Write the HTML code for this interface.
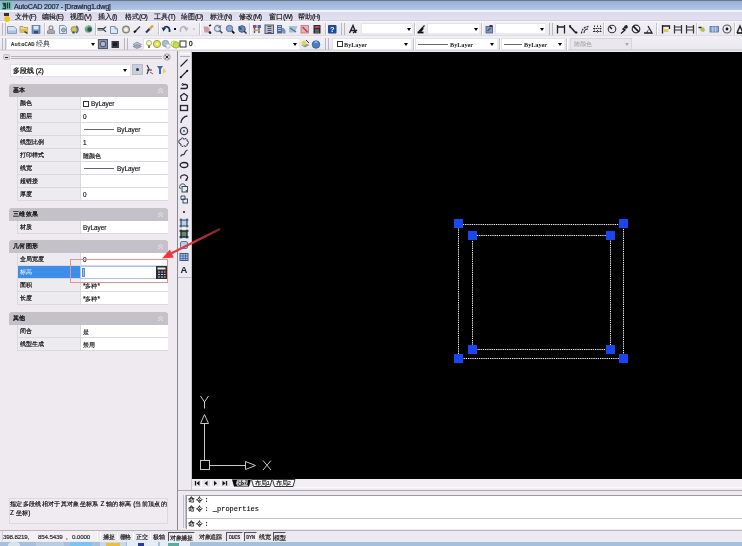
<!DOCTYPE html><html><head><meta charset="utf-8"><style>*{margin:0;padding:0;box-sizing:border-box}
html{width:742px;height:546px;overflow:hidden;background:#eeeaf0}
body{filter:blur(.35px);width:742px;height:546px;overflow:hidden;background:#eeeaf0;font-family:"Liberation Sans",sans-serif;color:#222}
.a{position:absolute}
svg.a{overflow:visible}
#title{left:0;top:0;width:742px;height:12px;background:linear-gradient(#6a7890 0,#6a7890 1px,#98b0d2 1px,#b2c8ea 10.5px,#f2f4fc 10.5px,#f2f4fc 12px)}
#title .t{left:14px;top:0.5px;font-size:7.2px;line-height:11px;color:#1c2436;letter-spacing:-0.25px;-webkit-text-stroke:.2px #1c2436}
#menu{left:0;top:12px;width:742px;height:10px;background:linear-gradient(#dcd8ec 0,#e2e0f0 7.5px,#d2d0da 8px,#d2d0da 9px,#f8f8fc 9px)}
.mi{top:0px;font-size:7px;line-height:10px;color:#111;white-space:nowrap;-webkit-text-stroke:.15px #111}.mi i{font-style:normal;font-size:7px;letter-spacing:-.7px}
#tb1{left:0;top:22px;width:742px;height:14px;background:linear-gradient(#f2f0f6,#ebe9f0 12.5px,#c8c6cc 13px,#f6f4f8 14px)}
#tb2{left:0;top:36px;width:742px;height:15px;background:linear-gradient(#f2f0f6,#ebe9f0 13px,#c8c6cc 14px,#eeeaf0 15px)}
.dd{background:#fff;border:1px solid #ebe9f0;border-top-color:#e4e2e8;border-left-color:#e4e2e8}
.arr{width:0;height:0;border-left:2.5px solid transparent;border-right:2.5px solid transparent;border-top:3px solid #000}
.hd{width:4px;height:12px;border-left:1px solid #b8b6be;border-right:1px solid #b8b6be}
.sp{width:2px;height:12px;border-left:1px solid #c4c2ca;border-right:1px solid #fff}
.wtxt{font-size:6.4px;line-height:12px;color:#222;white-space:nowrap}
.wtxt2{font-family:"Liberation Serif",serif;font-size:6.2px;font-weight:bold;line-height:13px;color:#222;white-space:nowrap}
#panel{left:0;top:51px;width:177px;height:479px;background:#eeeaf0}
#vline{left:176.5px;top:51px;width:1.5px;height:479px;background:#8a8890}
#vtb{left:178px;top:51px;width:14px;height:439px;background:#eceaf0;border-right:1px solid #c8c6cc}
#canvas{left:192px;top:52px;width:550px;height:427px;background:#000}
.ptxt{font-size:6.5px;line-height:12px;color:#111;-webkit-text-stroke:.25px #111;white-space:nowrap}
.sh{left:9px;width:159px;height:13px;background:#c5c1c9;border-radius:3px 3px 0 0;font-size:6px;line-height:12px;padding-left:4px;letter-spacing:.4px;color:#111;-webkit-text-stroke:.3px #111;white-space:nowrap}
.row{left:17px;width:151px;height:13px;font-size:6.4px;line-height:11px;border-bottom:1px solid #dcd8e0;white-space:nowrap}
.row .l{position:absolute;left:0;top:0;width:63px;height:12px;padding-left:2px;border-left:1px solid #dcd8e0;background:#eeebf0;color:#111;-webkit-text-stroke:.2px #111}
.row .v{position:absolute;left:63px;top:0;width:88px;height:12px;padding-left:2px;line-height:13px;background:#fff;border-left:1px solid #dcd8e0;color:#111;-webkit-text-stroke:.15px #111}
.row.sel .l{background:#3d8ee8;color:#fff;-webkit-text-stroke:0}
.ln{position:absolute;left:3px;top:6px;width:30px;height:1px;background:#666}
.cb{position:absolute;left:2px;top:3.5px;width:6px;height:6px;border:1px solid #333;background:#fff}
.desc{font-size:7px;line-height:10px;color:#111;white-space:nowrap;-webkit-text-stroke:.2px #111;transform:scale(.905);transform-origin:0 0}
#cmd{left:178px;top:490px;width:564px;height:40px;background:#eeeaf0;border-top:1px solid #a8a6ae}
#cmdbox{left:186px;top:495px;width:556px;height:34px;background:#fff;border-left:1px solid #9a98a0;border-top:1px solid #9a98a0}
.ct{font-family:"Liberation Mono",monospace;font-size:7px;line-height:9px;color:#000;-webkit-text-stroke:.1px #000;left:188px;white-space:pre}
#status{left:0;top:530px;width:742px;height:12px;background:#eceaee;border-top:1px solid #b8b6bc}
.coord{font-size:6.2px;line-height:11px;color:#222;white-space:pre;letter-spacing:-.15px;-webkit-text-stroke:.15px #222}
.sbtn{height:10px;font-size:6.2px;line-height:10px;color:#111;text-align:center;white-space:nowrap;letter-spacing:-.1px;-webkit-text-stroke:.15px #111}
.tabt{font-size:6px;line-height:8px;color:#111;white-space:nowrap;letter-spacing:-.2px;-webkit-text-stroke:.15px currentColor}
#taskbar{left:0;top:541px;width:742px;height:5px;background:linear-gradient(#e4ecf4 0,#e4ecf4 1px,#a8c0dc 1px,#a4bedc)}
.cj{letter-spacing:1.2px}
</style></head><body>
<div id="title" class="a">
<svg class="a" style="left:1px;top:1px" width="11" height="9" viewBox="0 0 11 9"><rect x="0" y="0" width="11" height="9" fill="#7fc6b8"/><path d="M1.5 2.5h3v1.5h-1.5v1h1.5v2.5h-3" stroke="#14423a" stroke-width="1.3" fill="none"/><path d="M6.5 1.5v6M8.5 1.5v6" stroke="#14423a" stroke-width="1.3"/></svg>
<div class="a t">AutoCAD 2007 - [Drawing1.dwg]</div>
</div>
<div id="menu" class="a">
<svg class="a" style="left:2px;top:0px" width="10" height="10" viewBox="0 0 10 10"><path d="M2 1h5v3H2z" fill="#333"/><circle cx="5" cy="7" r="3" fill="#e8c820"/></svg>
<div class="a mi" style="left:15px">文件<i>(F)</i></div>
<div class="a mi" style="left:42px">编辑<i>(E)</i></div>
<div class="a mi" style="left:70px">视图<i>(V)</i></div>
<div class="a mi" style="left:98px">插入<i>(I)</i></div>
<div class="a mi" style="left:125px">格式<i>(O)</i></div>
<div class="a mi" style="left:154px">工具<i>(T)</i></div>
<div class="a mi" style="left:181px">绘图<i>(D)</i></div>
<div class="a mi" style="left:210px">标注<i>(N)</i></div>
<div class="a mi" style="left:239px">修改<i>(M)</i></div>
<div class="a mi" style="left:269px">窗口<i>(W)</i></div>
<div class="a mi" style="left:298px">帮助<i>(H)</i></div>
</div>
<div id="tb1" class="a"></div><div id="tb2" class="a"></div>
<div class="a hd" style="left:2px;top:23px"></div>
<svg class="a" style="left:7px;top:24px" width="10" height="10" viewBox="0 0 10 10"><path d="M0.5 2.5h6.5l2.5 2.5v4.5h-9z" fill="#d4e4f4" stroke="#8a9cb8" stroke-width="1"/><path d="M1 6.5h8v2.5H1z" fill="#a8c4e4"/></svg>
<svg class="a" style="left:19px;top:24px" width="10" height="10" viewBox="0 0 10 10"><path d="M1 2.5h3l1 1h3.5v5H1z" fill="#e8d890" stroke="#a89040" stroke-width=".8"/><path d="M2 5h7.5l-1.5 4H1z" fill="#d8c060"/><path d="M5.5 7.5l3 2" stroke="#333" stroke-width="1.3"/></svg>
<svg class="a" style="left:31px;top:24px" width="10" height="10" viewBox="0 0 10 10"><rect x="1" y="1.5" width="8" height="8" fill="#6a90c4" stroke="#4a6898" stroke-width=".6"/><rect x="2.5" y="2" width="5" height="3.5" fill="#dce8f4"/><rect x="3" y="7" width="4" height="2.5" fill="#3a4a68"/></svg>
<div class="a sp" style="left:44px;top:23px"></div>
<svg class="a" style="left:46px;top:24px" width="10" height="10" viewBox="0 0 10 10"><circle cx="5" cy="3.8" r="1.9" fill="none" stroke="#8a8a94" stroke-width="1.2"/><path d="M1.5 9.5v-2.5l1.5-1.5h4l1.5 1.5v2.5z" fill="#a8a8b0" stroke="#80808a" stroke-width=".8"/></svg>
<svg class="a" style="left:58px;top:24px" width="10" height="10" viewBox="0 0 10 10"><path d="M1.5 1.5h5l2 2v6h-7z" fill="#e4ecf6" stroke="#8098b8" stroke-width="1"/><circle cx="5.5" cy="6" r="2" fill="#a0b8d8" stroke="#607898" stroke-width=".8"/></svg>
<svg class="a" style="left:70px;top:24px" width="10" height="10" viewBox="0 0 10 10"><circle cx="4" cy="5.5" r="3" fill="#d0c850" stroke="#888040" stroke-width=".7"/><path d="M6 2a4 4 0 0 1 0 7" stroke="#4a70a8" stroke-width="1.5" fill="none"/><circle cx="3.5" cy="8.5" r="1.3" fill="#555"/></svg>
<svg class="a" style="left:83px;top:24px" width="10" height="10" viewBox="0 0 10 10"><circle cx="5.5" cy="5" r="3.8" fill="#70a890"/><circle cx="6.5" cy="5.5" r="2.2" fill="#2a5a48"/><path d="M2 3.5a4 4 0 0 1 3-2" stroke="#d0e8f0" stroke-width="1" fill="none"/></svg>
<div class="a sp" style="left:95px;top:23px"></div>
<svg class="a" style="left:97px;top:24px" width="10" height="10" viewBox="0 0 10 10"><path d="M0.5 4.5h5.5M0.5 6h5.5" stroke="#3a3e4a" stroke-width="1"/><path d="M6 5.2l3-2.5M6 5.2l3 2.5" stroke="#3a3e4a" stroke-width="1.2"/></svg>
<svg class="a" style="left:109px;top:24px" width="10" height="10" viewBox="0 0 10 10"><path d="M1.5 2.5h4.5l2.5 2.5v4.5h-7z" fill="#d8e8f6" stroke="#7a8ca8" stroke-width="1"/><path d="M6 2.5v2.5h2.5" fill="none" stroke="#7a8ca8" stroke-width=".8"/></svg>
<svg class="a" style="left:121px;top:24px" width="10" height="10" viewBox="0 0 10 10"><circle cx="5" cy="5.5" r="3.3" fill="#dcdcd0" stroke="#8a8a70" stroke-width="1.4"/><circle cx="5" cy="5.5" r="1.5" fill="#f4f4f4"/></svg>
<svg class="a" style="left:132px;top:24px" width="10" height="10" viewBox="0 0 10 10"><path d="M8 2.5L3.5 7" stroke="#333" stroke-width="1.3"/><path d="M3.8 6.7L2 8.5" stroke="#111" stroke-width="2"/></svg>
<svg class="a" style="left:144px;top:24px" width="10" height="10" viewBox="0 0 10 10"><path d="M9 1.5L5 5.5" stroke="#c8a850" stroke-width="2.4"/><path d="M5.5 5L2 8.5" stroke="#2a3a68" stroke-width="2.2"/></svg>
<div class="a sp" style="left:158px;top:23px"></div>
<svg class="a" style="left:161px;top:24px" width="10" height="10" viewBox="0 0 10 10"><path d="M8.5 8V5.5a3 3 0 0 0-5.5-1.5" stroke="#1a3468" stroke-width="1.8" fill="none"/><path d="M0.5 3.5l4.5 0.5-2.5 3.5z" fill="#1a3468"/></svg>
<div class="a" style="left:174px;top:28px;width:2px;height:2px;background:#111"></div>
<svg class="a" style="left:179px;top:24px" width="10" height="10" viewBox="0 0 10 10"><path d="M1.5 8V5.5a3 3 0 0 1 5.5-1.5" stroke="#b4b2ba" stroke-width="1.5" fill="none"/><path d="M9.5 3.5l-4.5 0.5 2.5 3.5z" fill="#b4b2ba"/></svg>
<div class="a" style="left:193px;top:28px;width:2px;height:2px;background:#ccc"></div>
<div class="a sp" style="left:199px;top:23px"></div>
<svg class="a" style="left:202px;top:24px" width="10" height="10" viewBox="0 0 10 10"><path d="M1.5 2.5h4l2 2v4h-5z" fill="#d09aa8"/><path d="M7 2l2 -1M7 8l2 1.5" stroke="#223" stroke-width="1.4"/><circle cx="8" cy="8.5" r="1.2" fill="#223"/></svg>
<svg class="a" style="left:213px;top:24px" width="10" height="10" viewBox="0 0 10 10"><circle cx="4.5" cy="4.5" r="3" fill="#dde4ee" stroke="#7890a8" stroke-width="1.3"/><path d="M6.8 6.8L9.3 9.3" stroke="#445" stroke-width="1.6"/><path d="M8 1.5L5.5 4" stroke="#445" stroke-width="1"/></svg>
<svg class="a" style="left:225px;top:24px" width="10" height="10" viewBox="0 0 10 10"><circle cx="4.5" cy="4.5" r="3.2" fill="#8aa8d0" stroke="#5878a8" stroke-width="1"/><path d="M7 7L9.3 9.3" stroke="#111" stroke-width="1.8"/></svg>
<svg class="a" style="left:237px;top:24px" width="10" height="10" viewBox="0 0 10 10"><circle cx="5" cy="5" r="3.3" fill="#6a88b8" stroke="#3a5888" stroke-width="1"/><path d="M7 7L9.5 9.5" stroke="#334" stroke-width="1.6"/><path d="M1.5 2.5l3 3" stroke="#345" stroke-width="1.2"/></svg>
<div class="a sp" style="left:249px;top:23px"></div>
<svg class="a" style="left:252px;top:24px" width="10" height="10" viewBox="0 0 10 10"><rect x="1" y="1" width="3.5" height="3" fill="#a04098"/><rect x="5.5" y="1" width="3.5" height="3" fill="#4070b0"/><path d="M2.5 4v5M7 4v5" stroke="#556" stroke-width="1.4"/><rect x="2" y="5.5" width="6" height="1.5" fill="#c0a040"/></svg>
<svg class="a" style="left:264px;top:24px" width="10" height="10" viewBox="0 0 10 10"><rect x="1" y="1" width="8.5" height="8.5" fill="#b8c0d0" stroke="#505870" stroke-width="1"/><path d="M3.5 2.5h4M3.5 4.5h4M3.5 6.5h4M3.5 8.5h4" stroke="#40485c" stroke-width=".9"/></svg>
<svg class="a" style="left:276px;top:24px" width="10" height="10" viewBox="0 0 10 10"><rect x="1" y="1" width="5" height="8.5" fill="#4a6a9a"/><path d="M2 2.5h3M2 4.5h3M2 6.5h3" stroke="#cde" stroke-width=".8"/><path d="M5.5 4h2l2 2v3.5h-3z" fill="#7a90b8"/></svg>
<svg class="a" style="left:288px;top:24px" width="10" height="10" viewBox="0 0 10 10"><path d="M1 2h8.5L7 8.5H1z" fill="#a8c0d8"/><path d="M2 4l6 4" stroke="#4a7898" stroke-width="1.4"/></svg>
<svg class="a" style="left:300px;top:24px" width="10" height="10" viewBox="0 0 10 10"><rect x="1" y="1.5" width="7.5" height="7.5" fill="#e8b0b8" stroke="#c07080" stroke-width=".8"/><path d="M2.5 3l5 5" stroke="#b04858" stroke-width="1.6"/></svg>
<svg class="a" style="left:312px;top:24px" width="10" height="10" viewBox="0 0 10 10"><rect x="1.5" y="1" width="7" height="8.5" fill="#2a2a32"/><rect x="2.5" y="2" width="5" height="2" fill="#d04060"/><path d="M3 6h4M3 8h4" stroke="#aaa" stroke-width=".8"/></svg>
<div class="a sp" style="left:325px;top:23px"></div>
<svg class="a" style="left:327px;top:24px" width="10" height="10" viewBox="0 0 10 10"><rect x="1" y="1" width="8.5" height="8.5" rx="1" fill="#1e4c9a"/><text x="5.25" y="8" font-size="7.5" font-weight="bold" fill="#fff" text-anchor="middle" font-family="Liberation Sans">?</text></svg>
<div class="a hd" style="left:341px;top:23px"></div>
<svg class="a" style="left:348px;top:24px" width="10" height="10" viewBox="0 0 10 10"><path d="M1.5 9L5 1.5l3 7.5M3 6.5h4" stroke="#222" stroke-width="1.4" fill="none"/><path d="M5 9l4-3" stroke="#111" stroke-width="1.3"/></svg>
<div class="a dd" style="left:361px;top:23px;width:52px;height:11px"></div>
<div class="a arr" style="left:407px;top:28px"></div>
<div class="a sp" style="left:414px;top:23px"></div>
<svg class="a" style="left:416px;top:24px" width="10" height="10" viewBox="0 0 10 10"><path d="M1.5 8.5h6" stroke="#111" stroke-width="1.8"/><path d="M2.5 8L8.5 1.5" stroke="#222" stroke-width="1.2"/><path d="M4 7.5l3-3.5" stroke="#111" stroke-width="2.2"/></svg>
<div class="a dd" style="left:427px;top:23px;width:53px;height:11px"></div>
<div class="a arr" style="left:474px;top:28px"></div>
<div class="a sp" style="left:481px;top:23px"></div>
<svg class="a" style="left:484px;top:24px" width="10" height="10" viewBox="0 0 10 10"><rect x="2" y="2.5" width="6.5" height="6.5" fill="#8098c0" stroke="#4a5a80" stroke-width=".8"/><path d="M3.5 7l3-3" stroke="#223" stroke-width="1"/><rect x="5.5" y="1" width="3" height="2" fill="#334"/></svg>
<div class="a dd" style="left:495px;top:23px;width:51px;height:11px"></div>
<div class="a arr" style="left:540px;top:28px"></div>
<div class="a hd" style="left:549px;top:23px"></div>
<svg class="a" style="left:556px;top:24px" width="10" height="10" viewBox="0 0 10 10"><path d="M1.5 1v8.5M8.5 1v8.5M1.5 3h7" stroke="#222" stroke-width="1.3"/></svg>
<svg class="a" style="left:568px;top:24px" width="10" height="10" viewBox="0 0 10 10"><path d="M1.5 2.5l1.5 1M3 3.5l4 4.5M7 8l1.5 1" stroke="#222" stroke-width="1.6"/><circle cx="2" cy="2" r="1" fill="#111"/><circle cx="8.5" cy="8.5" r="1" fill="#111"/></svg>
<svg class="a" style="left:580px;top:24px" width="10" height="10" viewBox="0 0 10 10"><path d="M1.5 9.5a7 7 0 0 1 7-7" stroke="#333" stroke-width="1.3" fill="none" stroke-dasharray="2 1"/><path d="M4 9a4 4 0 0 1 4-4" stroke="#222" stroke-width="1.1" fill="none"/></svg>
<svg class="a" style="left:592px;top:24px" width="10" height="10" viewBox="0 0 10 10"><path d="M2.5 1.5v7M5.5 1.5v3M5.5 6v3M8.5 1.5v7M1 4.5h8.5M1 7.5h8.5" stroke="#333" stroke-width="1" stroke-dasharray="1.5 1"/></svg>
<div class="a sp" style="left:603px;top:23px"></div>
<svg class="a" style="left:607px;top:24px" width="10" height="10" viewBox="0 0 10 10"><circle cx="5" cy="5" r="3.8" fill="none" stroke="#333" stroke-width="1.1"/><path d="M2.5 2.5L5 5" stroke="#111" stroke-width="1.5"/></svg>
<svg class="a" style="left:619px;top:24px" width="10" height="10" viewBox="0 0 10 10"><path d="M8 1.5L4 5l2 1L2 9.5" stroke="#222" stroke-width="1.4" fill="none"/><circle cx="7" cy="3" r="1.8" fill="#222"/></svg>
<svg class="a" style="left:631px;top:24px" width="10" height="10" viewBox="0 0 10 10"><circle cx="5" cy="5" r="3.8" fill="none" stroke="#333" stroke-width="1.2"/><path d="M2 2l6 6" stroke="#111" stroke-width="1.7"/></svg>
<svg class="a" style="left:643px;top:24px" width="10" height="10" viewBox="0 0 10 10"><path d="M1 9h8L5 2" stroke="#222" stroke-width="1.3" fill="none"/><path d="M4 9a3 3 0 0 1 1.5-3" stroke="#222" fill="none"/></svg>
<div class="a sp" style="left:656px;top:23px"></div>
<svg class="a" style="left:661px;top:24px" width="10" height="10" viewBox="0 0 10 10"><path d="M1.5 1v8.5M1.5 2h7v3" stroke="#222" stroke-width="1.3" fill="none"/><rect x="2.5" y="5" width="5" height="3" fill="#d8d050"/></svg>
<svg class="a" style="left:673px;top:24px" width="10" height="10" viewBox="0 0 10 10"><path d="M1.5 1v8.5M8.5 1v8.5M1.5 3h7M1.5 6h7" stroke="#333" stroke-width="1.2"/></svg>
<svg class="a" style="left:685px;top:24px" width="10" height="10" viewBox="0 0 10 10"><path d="M1.5 1v8.5M8.5 1v8.5M1.5 3h7M1.5 6h7" stroke="#333" stroke-width="1.2"/></svg>
<div class="a sp" style="left:696px;top:23px"></div>
<svg class="a" style="left:697px;top:24px" width="10" height="10" viewBox="0 0 10 10"><path d="M1.5 3.5h2.5L7 7" stroke="#222" stroke-width="1.5" fill="none"/><circle cx="5.5" cy="5.5" r="2.2" fill="#b0c040"/></svg>
<svg class="a" style="left:709px;top:24px" width="10" height="10" viewBox="0 0 10 10"><rect x="1" y="2.5" width="8.5" height="5.5" fill="#8aa8d8" stroke="#5070a8" stroke-width=".8"/><path d="M3.8 2.5v5.5M6.7 2.5v5.5" stroke="#d8e4f4" stroke-width=".7"/></svg>
<svg class="a" style="left:722px;top:24px" width="10" height="10" viewBox="0 0 10 10"><circle cx="5" cy="5" r="4" fill="none" stroke="#555" stroke-width="1.1"/><circle cx="5" cy="5" r="1.4" fill="#111"/></svg>
<div class="a sp" style="left:734px;top:23px"></div>
<svg class="a" style="left:736px;top:24px" width="10" height="10" viewBox="0 0 10 10"><path d="M1 9L4 2l3 7" stroke="#222" stroke-width="1.4" fill="none"/><path d="M1 9h9" stroke="#111" stroke-width="1.6"/></svg>
<div class="a hd" style="left:2px;top:38px"></div>
<div class="a dd" style="left:6px;top:38px;width:92px;height:12px"></div>
<div class="a wtxt" style="left:11px;top:38px"><span style="font-family:Liberation Mono;font-size:5.4px;letter-spacing:.15px;-webkit-text-stroke:.2px #222">AutoCAD</span> <span style="font-size:6.6px">经典</span></div>
<div class="a arr" style="left:91px;top:43px"></div>
<svg class="a" style="left:98px;top:39px" width="10" height="10" viewBox="0 0 10 10"><rect x="0.5" y="0.5" width="9" height="9" fill="#8890a8" stroke="#505870" stroke-width="1"/><circle cx="5" cy="5" r="2.8" fill="#b0b8cc" stroke="#404860" stroke-width=".9"/></svg>
<svg class="a" style="left:110px;top:39px" width="10" height="10" viewBox="0 0 10 10"><rect x="1.5" y="2" width="7.5" height="7" fill="#383c48"/><rect x="3" y="3.5" width="4" height="3.5" fill="#1a1c22"/></svg>
<div class="a hd" style="left:124px;top:38px"></div>
<svg class="a" style="left:132px;top:39px" width="10" height="10" viewBox="0 0 10 10"><path d="M1 5.5l4-2.5 4.5 2.5-4.5 2.5z" fill="#b8c4d8" stroke="#7888a0" stroke-width=".7"/><path d="M1 7.5l4-2 4.5 2-4.5 2z" fill="#98a8c0" stroke="#7888a0" stroke-width=".7"/></svg>
<div class="a dd" style="left:143px;top:38px;width:157px;height:12px"></div>
<svg class="a" style="left:144px;top:39px" width="10" height="10" viewBox="0 0 10 10"><circle cx="5" cy="4" r="2.6" fill="#f4f4c0" stroke="#a8a860" stroke-width=".8"/><path d="M5 6.5v2.5" stroke="#444" stroke-width="1.5"/></svg>
<svg class="a" style="left:152px;top:39px" width="10" height="10" viewBox="0 0 10 10"><circle cx="5" cy="5" r="3.6" fill="#e0e060" stroke="#a0a030" stroke-width="1"/><circle cx="5" cy="5" r="1.3" fill="#f8f8a0"/></svg>
<svg class="a" style="left:161px;top:39px" width="10" height="10" viewBox="0 0 10 10"><circle cx="4.5" cy="4.5" r="3.2" fill="#a8c0d0" stroke="#7890a0" stroke-width=".8"/><rect x="5" y="5" width="4" height="4" fill="#eef4f8" stroke="#98a8b8" stroke-width=".6"/></svg>
<svg class="a" style="left:170px;top:39px" width="10" height="10" viewBox="0 0 10 10"><circle cx="4" cy="5" r="3" fill="none" stroke="#b8d040" stroke-width="1"/><circle cx="6" cy="6" r="3.2" fill="#c8e048" stroke="#98b030" stroke-width=".8"/></svg>
<svg class="a" style="left:178px;top:39px" width="10" height="10" viewBox="0 0 10 10"><rect x="2" y="2" width="6" height="6" fill="#fff" stroke="#333" stroke-width="1"/></svg>
<div class="a wtxt" style="left:189px;top:38px;-webkit-text-stroke:.3px #222">0</div>
<div class="a arr" style="left:293px;top:43px"></div>
<svg class="a" style="left:300px;top:39px" width="10" height="10" viewBox="0 0 10 10"><path d="M1 6l4-2 4.5 2-4.5 2.5z" fill="#9098a8"/><circle cx="4" cy="4" r="2.5" fill="#d8d860"/><path d="M6 1l3 3" stroke="#333"/></svg>
<svg class="a" style="left:311px;top:39px" width="10" height="10" viewBox="0 0 10 10"><circle cx="5" cy="5.5" r="3.8" fill="#4a80c0" stroke="#2a5a98" stroke-width=".8"/><path d="M3 4l2-3 2 3" fill="#8ab0e0"/></svg>
<div class="a hd" style="left:325px;top:38px"></div>
<div class="a dd" style="left:332px;top:38px;width:80px;height:12px"></div>
<div class="a" style="left:337px;top:41px;width:6px;height:6px;border:1px solid #333;background:#fff"></div>
<div class="a wtxt2" style="left:344px;top:38px">ByLayer</div>
<div class="a arr" style="left:404px;top:43px"></div>
<div class="a sp" style="left:413px;top:38px"></div>
<div class="a dd" style="left:415px;top:38px;width:83px;height:12px"></div>
<div class="a" style="left:418px;top:44px;width:30px;height:1px;background:#666"></div>
<div class="a wtxt2" style="left:450px;top:38px">ByLayer</div>
<div class="a arr" style="left:490px;top:43px"></div>
<div class="a sp" style="left:499px;top:38px"></div>
<div class="a dd" style="left:501px;top:38px;width:64px;height:12px"></div>
<div class="a" style="left:504px;top:44px;width:18px;height:1px;background:#666"></div>
<div class="a wtxt2" style="left:524px;top:38px">ByLayer</div>
<div class="a arr" style="left:558px;top:43px"></div>
<div class="a sp" style="left:566px;top:38px"></div>
<div class="a" style="left:570px;top:38px;width:62px;height:12px;background:#eae8ee;border:1px solid #d8d6dc"></div>
<div class="a wtxt" style="left:574px;top:38px;color:#999">随颜色</div>
<div class="a arr" style="left:625px;top:43px;border-top-color:#aaa"></div>
<div id="panel" class="a"></div>
<div class="a" style="left:3px;top:54px;width:7px;height:6px;background:#dcd9e0;border:1px solid #c0bec6;border-radius:1.5px"></div>
<div class="a" style="left:5px;top:56.5px;width:3px;height:1.5px;background:#222"></div>
<div class="a" style="left:11px;top:55.5px;width:151px;height:1px;background:#b4b2ba"></div>
<div class="a" style="left:11px;top:58px;width:151px;height:1px;background:#b4b2ba"></div>
<svg class="a" style="left:163px;top:53px" width="8" height="8" viewBox="0 0 8 8"><circle cx="4" cy="4" r="3.3" fill="#d8d6dc" stroke="#888" stroke-width=".6"/><path d="M2.5 2.5l3 3M5.5 2.5l-3 3" stroke="#222" stroke-width="1"/></svg>
<div class="a dd" style="left:10px;top:64px;width:121px;height:13px;border-color:#e4e0e8"></div>
<div class="a ptxt" style="left:13px;top:65px">多段线 (2)</div>
<div class="a arr" style="left:123px;top:69px"></div>
<svg class="a" style="left:132px;top:64px" width="11" height="11" viewBox="0 0 11 11"><rect x=".5" y=".5" width="10" height="10" fill="#c8d0e0" stroke="#9aa" stroke-width=".6"/><circle cx="5.5" cy="5.5" r="1.5" fill="#334"/></svg>
<svg class="a" style="left:144px;top:64px" width="11" height="11" viewBox="0 0 11 11"><path d="M3 1l2 4-2 5M3 6h5" stroke="#333" stroke-width="1.1" fill="none"/><path d="M6 8l3 2" stroke="#a44" stroke-width="1"/></svg>
<svg class="a" style="left:156px;top:64px" width="11" height="11" viewBox="0 0 11 11"><path d="M1 2h6l-2 3v5H3V5z" fill="#3a6ab0"/><path d="M7 4l3 3-3 3" fill="#e8d040"/></svg>
<div class="a sh" style="top:84px">基本</div>
<svg class="a" style="left:157px;top:87px" width="7" height="7" viewBox="0 0 7 7"><path d="M1 3.5l2.5-2 2.5 2M1 6l2.5-2 2.5 2" stroke="#e8e6ec" stroke-width="1" fill="none"/></svg>
<div class="a row" style="top:97px"><div class="l">颜色</div><div class="v"><span class="cb"></span><span class="a" style="left:10px;top:0">ByLayer</span></div></div>
<div class="a row" style="top:110px"><div class="l">图层</div><div class="v">0</div></div>
<div class="a row" style="top:123px"><div class="l">线型</div><div class="v"><span class="ln"></span><span class="a" style="left:36px;top:0">ByLayer</span></div></div>
<div class="a row" style="top:136px"><div class="l">线型比例</div><div class="v">1</div></div>
<div class="a row" style="top:149px"><div class="l">打印样式</div><div class="v">随颜色</div></div>
<div class="a row" style="top:162px"><div class="l">线宽</div><div class="v"><span class="ln"></span><span class="a" style="left:36px;top:0">ByLayer</span></div></div>
<div class="a row" style="top:175px"><div class="l">超链接</div><div class="v"></div></div>
<div class="a row" style="top:188px"><div class="l">厚度</div><div class="v">0</div></div>
<div class="a sh" style="top:208px">三维效果</div>
<svg class="a" style="left:157px;top:211px" width="7" height="7" viewBox="0 0 7 7"><path d="M1 3.5l2.5-2 2.5 2M1 6l2.5-2 2.5 2" stroke="#e8e6ec" stroke-width="1" fill="none"/></svg>
<div class="a row" style="top:221px"><div class="l">材质</div><div class="v">ByLayer</div></div>
<div class="a sh" style="top:240px">几何图形</div>
<svg class="a" style="left:157px;top:243px" width="7" height="7" viewBox="0 0 7 7"><path d="M1 3.5l2.5-2 2.5 2M1 6l2.5-2 2.5 2" stroke="#e8e6ec" stroke-width="1" fill="none"/></svg>
<div class="a row" style="top:253px"><div class="l">全局宽度</div><div class="v">0</div></div>
<div class="a row sel" style="top:266px"><div class="l">标高</div><div class="v"></div></div>
<div class="a row" style="top:279px"><div class="l">面积</div><div class="v">*多种*</div></div>
<div class="a row" style="top:292px"><div class="l">长度</div><div class="v">*多种*</div></div>
<div class="a sh" style="top:312px">其他</div>
<svg class="a" style="left:157px;top:315px" width="7" height="7" viewBox="0 0 7 7"><path d="M1 3.5l2.5-2 2.5 2M1 6l2.5-2 2.5 2" stroke="#e8e6ec" stroke-width="1" fill="none"/></svg>
<div class="a row" style="top:325px"><div class="l">闭合</div><div class="v">是</div></div>
<div class="a row" style="top:338px"><div class="l">线型生成</div><div class="v">禁用</div></div>
<div class="a" style="left:80px;top:266px;width:87px;height:13px;background:#fff;border:1px solid #a8c4e8"></div>
<div class="a" style="left:82px;top:268px;width:3px;height:9px;background:#9cc4ec;border:1px solid #5a8ac0"></div>
<svg class="a" style="left:156px;top:266px" width="11" height="13" viewBox="0 0 11 13"><rect x="0" y="0" width="11" height="13" fill="#2a2c34"/><rect x="1.5" y="1.5" width="8" height="2" fill="#e8e8f0"/><path d="M2 6h2M5 6h2M8 6h1.5M2 8.5h2M5 8.5h2M8 8.5h1.5M2 11h2M5 11h2M8 11h1.5" stroke="#ccd" stroke-width="1.1"/></svg>
<div class="a" style="left:70px;top:259px;width:98px;height:24px;border:1px solid #e69090"></div>
<div class="a" style="left:9px;top:498px;width:159px;height:26px;border:1px solid #dcd8e0;background:#efebf1"></div>
<div class="a desc" style="left:10px;top:500px;width:170px">指定多段线相对于其对象坐标系 Z 轴的标高 (当前顶点的<br>Z 坐标)</div>
<div id="vline" class="a"></div>
<div id="vtb" class="a"></div>
<div class="a" style="left:180px;top:53px;width:10px;height:1px;background:#b0aeb6;border-bottom:1px solid #fff"></div>
<div class="a" style="left:180px;top:56px;width:10px;height:1px;background:#b0aeb6"></div>
<div class="a" style="left:178px;top:277px;width:14px;height:1px;background:#c0bec6"></div>
<svg class="a" style="left:179px;top:58px" width="10" height="10" viewBox="0 0 10 10"><path d="M1.5 8.5L8.5 1.5" stroke="#222" stroke-width="1.1"/></svg>
<svg class="a" style="left:179px;top:69px" width="10" height="10" viewBox="0 0 10 10"><path d="M1 9L9 1" stroke="#222" stroke-width="1.1"/><circle cx="2" cy="8" r="1" fill="#111"/><circle cx="8" cy="2" r="1" fill="#111"/></svg>
<svg class="a" style="left:179px;top:80px" width="10" height="10" viewBox="0 0 10 10"><path d="M1.5 8.5h5a2 2 0 0 0 0-4H4" stroke="#223" stroke-width="1.3" fill="none"/><path d="M4 3l-1 1.5 1 1.5" stroke="#223" fill="none"/></svg>
<svg class="a" style="left:179px;top:92px" width="10" height="10" viewBox="0 0 10 10"><path d="M5 1.5l3.5 2.5-1.3 4.5H2.8L1.5 4z" fill="none" stroke="#223" stroke-width="1.2"/></svg>
<svg class="a" style="left:179px;top:103px" width="10" height="10" viewBox="0 0 10 10"><rect x="1.5" y="2.5" width="7" height="5" fill="none" stroke="#223" stroke-width="1.3"/></svg>
<svg class="a" style="left:179px;top:114px" width="10" height="10" viewBox="0 0 10 10"><path d="M2 9a7 7 0 0 1 6.5-7" stroke="#223" stroke-width="1.3" fill="none"/></svg>
<svg class="a" style="left:179px;top:126px" width="10" height="10" viewBox="0 0 10 10"><circle cx="5" cy="5" r="3.6" fill="none" stroke="#345" stroke-width="1.3"/><circle cx="5" cy="5" r=".9" fill="#345"/></svg>
<svg class="a" style="left:179px;top:137px" width="10" height="10" viewBox="0 0 10 10"><path d="M2 2.5a1.5 1.5 0 0 1 3 0a1.5 1.5 0 0 1 3 1.5a1.5 1.5 0 0 1 0 3a1.5 1.5 0 0 1-3 1.5a1.5 1.5 0 0 1-3-1.5a1.5 1.5 0 0 1 0-4.5z" fill="none" stroke="#334" stroke-width="1"/></svg>
<svg class="a" style="left:179px;top:148px" width="10" height="10" viewBox="0 0 10 10"><path d="M1.5 8.5c2-4 3 0 4-3s2-3 3-3.5" stroke="#334" stroke-width="1.1" fill="none"/></svg>
<svg class="a" style="left:179px;top:160px" width="10" height="10" viewBox="0 0 10 10"><ellipse cx="5" cy="5" rx="3.8" ry="2.5" fill="none" stroke="#223" stroke-width="1.3"/></svg>
<svg class="a" style="left:179px;top:172px" width="10" height="10" viewBox="0 0 10 10"><path d="M2 6.5a3.5 2.5 0 1 1 5 1" stroke="#223" stroke-width="1.2" fill="none"/><path d="M6 8l2 .5-.5-2" stroke="#223" fill="none"/></svg>
<svg class="a" style="left:179px;top:183px" width="10" height="10" viewBox="0 0 10 10"><rect x="3" y="3.5" width="5.5" height="5.5" fill="none" stroke="#3a4a60" stroke-width="1"/><path d="M1.5 6a3 3 0 1 1 5-3" stroke="#3a4a60" stroke-width="1" fill="none"/><circle cx="7.5" cy="8" r="1" fill="#2a7a40"/></svg>
<svg class="a" style="left:179px;top:194px" width="10" height="10" viewBox="0 0 10 10"><path d="M2 2h4v3.5H2z" fill="none" stroke="#3a4a60" stroke-width="1"/><rect x="4" y="5" width="4.5" height="4" fill="none" stroke="#3a4a60" stroke-width="1"/></svg>
<svg class="a" style="left:179px;top:206px" width="10" height="10" viewBox="0 0 10 10"><circle cx="5" cy="6" r="1.1" fill="#223"/></svg>
<svg class="a" style="left:179px;top:218px" width="10" height="10" viewBox="0 0 10 10"><rect x="2" y="2" width="6" height="6" fill="#b8d0e8"/><path d="M0.5 2h9M0.5 8h9M2 0.5v9M8 0.5v9" stroke="#2a3a58" stroke-width="1.1"/></svg>
<svg class="a" style="left:179px;top:229px" width="10" height="10" viewBox="0 0 10 10"><rect x="2" y="2" width="6" height="6" fill="#6a8478"/><path d="M0.5 2h9M0.5 8h9M2 0.5v9M8 0.5v9" stroke="#1a2a28" stroke-width="1.3"/></svg>
<svg class="a" style="left:179px;top:240px" width="10" height="10" viewBox="0 0 10 10"><rect x="1.5" y="1.5" width="7" height="7" rx="1.5" fill="#b8cce8" stroke="#5a78a0" stroke-width="1"/></svg>
<svg class="a" style="left:179px;top:252px" width="10" height="10" viewBox="0 0 10 10"><rect x="1" y="1.5" width="8" height="7" fill="#a8c0e8" stroke="#3a5a90" stroke-width="1"/><path d="M1 4h8M1 6.5h8M4 1.5v7M6.5 1.5v7" stroke="#3a5a90" stroke-width=".7"/></svg>
<svg class="a" style="left:179px;top:264px" width="10" height="10" viewBox="0 0 10 10"><text x="5" y="9" font-size="9.5" font-weight="bold" fill="#222" text-anchor="middle" font-family="Liberation Sans">A</text></svg>
<div id="canvas" class="a"></div>
<svg class="a" style="left:192px;top:51px" width="550" height="429" viewBox="0 0 550 429"><g stroke="#f4f4f4" stroke-width="1" stroke-dasharray="1.3 0.9" fill="none"><rect x="266.5" y="173.5" width="165" height="134"/><rect x="280.5" y="184.5" width="138" height="114"/></g><g fill="#1846f0"><rect x="262" y="168" width="9" height="9"/><rect x="427" y="168" width="9" height="9"/><rect x="262" y="303" width="9" height="9"/><rect x="427" y="303" width="9" height="9"/><rect x="276" y="180" width="9" height="9"/><rect x="414" y="180" width="9" height="9"/><rect x="276" y="294" width="9" height="9"/><rect x="414" y="294" width="9" height="9"/></g><g stroke="#c8c8c8" stroke-width="1" fill="none"><rect x="8.5" y="409.5" width="9" height="9"/><path d="M12.5 409.5V372M17.5 414.5H54"/><path d="M8.5 372.5l4-9 4 9z"/><path d="M53.5 410.5l10 4-10 4z"/><path d="M8.5 345l4 6 4-6M12.5 351v6.5"/><path d="M71 409.5l8 9.5M79 409.5l-8 9.5"/></g></svg>
<svg class="a" style="left:150px;top:220px" width="80" height="50" viewBox="0 0 80 50"><defs><linearGradient id="rg" x1="0" y1="0" x2="1" y2="0" gradientUnits="objectBoundingBox"><stop offset="0" stop-color="#e83a3a"/><stop offset="0.46" stop-color="#e03a40"/><stop offset="0.56" stop-color="#c83040"/><stop offset="1" stop-color="#802030"/></linearGradient></defs><path d="M70 9L18 35" stroke="url(#rg)" stroke-width="2.3"/><path d="M12 38.5L23.8 37.6L19.8 29.6z" fill="#e83a3a"/></svg>
<div class="a" style="left:192px;top:479px;width:550px;height:11px;background:linear-gradient(#f2eff4 0,#f2eff4 8px,#faf8fc 8px,#faf8fc 9px,#f0edf2 9px)"></div>
<svg class="a" style="left:192px;top:479px" width="110" height="10" viewBox="0 0 110 10"><rect x="0" y="1" width="38" height="6.5" fill="#e8e6ec"/><path d="M9.5 1v6.5M19 1v6.5M28.5 1v6.5" stroke="#fafafa" stroke-width="1.2"/><path d="M3.5 2v4.5" stroke="#111" stroke-width="1.2"/><path d="M4.5 4.25l3-2.5v5z" fill="#111"/><path d="M12.5 4.25l3-2.5v5z" fill="#111"/><path d="M22 1.75v5l3-2.5z" fill="#111"/><path d="M30.5 1.75v5l3-2.5z" fill="#111"/><path d="M34.5 2v4.5" stroke="#111" stroke-width="1.2"/><path d="M40 0.5h19l-2 7H42z" fill="#0a0a0a"/><path d="M59.5 0.5h20.5l-2 7H61.5z" fill="#fff" stroke="#222" stroke-width=".9"/><path d="M80.5 0.5h22.5l-2 7H82.5z" fill="#fff" stroke="#222" stroke-width=".9"/></svg>
<div class="a tabt" style="left:236px;top:479px;color:#fff">模型</div>
<div class="a tabt" style="left:255px;top:479px">布局1</div>
<div class="a tabt" style="left:276px;top:479px">布局2</div>
<div id="cmd" class="a"></div>
<div class="a" style="left:183px;top:495px;width:1px;height:33px;background:#c0bec6"></div>
<div class="a" style="left:185px;top:495px;width:1px;height:33px;background:#c0bec6"></div>
<div id="cmdbox" class="a"></div>
<div class="a" style="left:187px;top:518px;width:555px;height:1px;background:#c4c2c8"></div>
<div class="a ct" style="top:496px"><span class="cj">命令</span>:</div>
<div class="a ct" style="top:505px"><span class="cj">命令</span>: _properties</div>
<div class="a ct" style="top:520px"><span class="cj">命令</span>:</div>
<div id="status" class="a"></div>
<div class="a" style="left:2px;top:531px;width:96px;height:10px;background:#f2f0f4;border-right:1px solid #fff;border-left:1px solid #d0ced4"></div>
<div class="a coord" style="left:3px;top:531px">398.8219,</div>
<div class="a coord" style="left:38px;top:531px">854.5439</div>
<div class="a coord" style="left:66px;top:531px">,</div>
<div class="a coord" style="left:72px;top:531px">0.0000</div>
<div class="a" style="left:100px;top:532px;width:1px;height:8px;background:#d4d2d8;border-right:1px solid #fff"></div>
<div class="a" style="left:117px;top:532px;width:1px;height:8px;background:#d4d2d8;border-right:1px solid #fff"></div>
<div class="a" style="left:133px;top:532px;width:1px;height:8px;background:#d4d2d8;border-right:1px solid #fff"></div>
<div class="a" style="left:150px;top:532px;width:1px;height:8px;background:#d4d2d8;border-right:1px solid #fff"></div>
<div class="a sbtn" style="left:101px;top:532px;width:16px;">捕捉</div>
<div class="a sbtn" style="left:118px;top:532px;width:15px;">栅格</div>
<div class="a sbtn" style="left:134px;top:532px;width:16px;">正交</div>
<div class="a sbtn" style="left:151px;top:532px;width:16px;">极轴</div>
<div class="a sbtn" style="left:168px;top:532px;width:27px;border:1px solid;border-color:#505058 #fafafa #fafafa #505058;">对象捕捉</div>
<div class="a sbtn" style="left:196px;top:532px;width:29px;">对象追踪</div>
<div class="a sbtn" style="left:226px;top:532px;width:17px;border:1px solid;border-color:#505058 #fafafa #fafafa #505058;font-family:Liberation Mono;font-size:5px;letter-spacing:-.2px;">DUCS</div>
<div class="a sbtn" style="left:244px;top:532px;width:13px;border:1px solid;border-color:#505058 #fafafa #fafafa #505058;font-family:Liberation Mono;font-size:5px;letter-spacing:-.2px;">DYN</div>
<div class="a sbtn" style="left:257px;top:532px;width:16px;">线宽</div>
<div class="a sbtn" style="left:273px;top:532px;width:13px;border:1px solid;border-color:#505058 #fafafa #fafafa #505058;">模型</div>
<div id="taskbar" class="a"></div>
<div class="a" style="left:8px;top:542px;width:12px;height:4px;background:#d8e4f0;border-radius:6px 6px 0 0"></div>
<div class="a" style="left:36px;top:542px;width:28px;height:4px;background:#b8cce4"></div>
<div class="a" style="left:70px;top:542px;width:22px;height:4px;background:#7cc4f0"></div>
<div class="a" style="left:100px;top:542px;width:26px;height:4px;background:#c8d8ec"></div>
<div class="a" style="left:106px;top:543px;width:14px;height:3px;background:#e8c040"></div>
<div class="a" style="left:127px;top:542px;width:31px;height:4px;background:#e4ecf6"></div>
<div class="a" style="left:138px;top:543px;width:6px;height:3px;background:#2a3a90"></div>
<div class="a" style="left:160px;top:542px;width:30px;height:4px;background:#e4ecf6"></div>
<div class="a" style="left:168px;top:543px;width:11px;height:3px;background:#60a8a0"></div>
</body></html>
